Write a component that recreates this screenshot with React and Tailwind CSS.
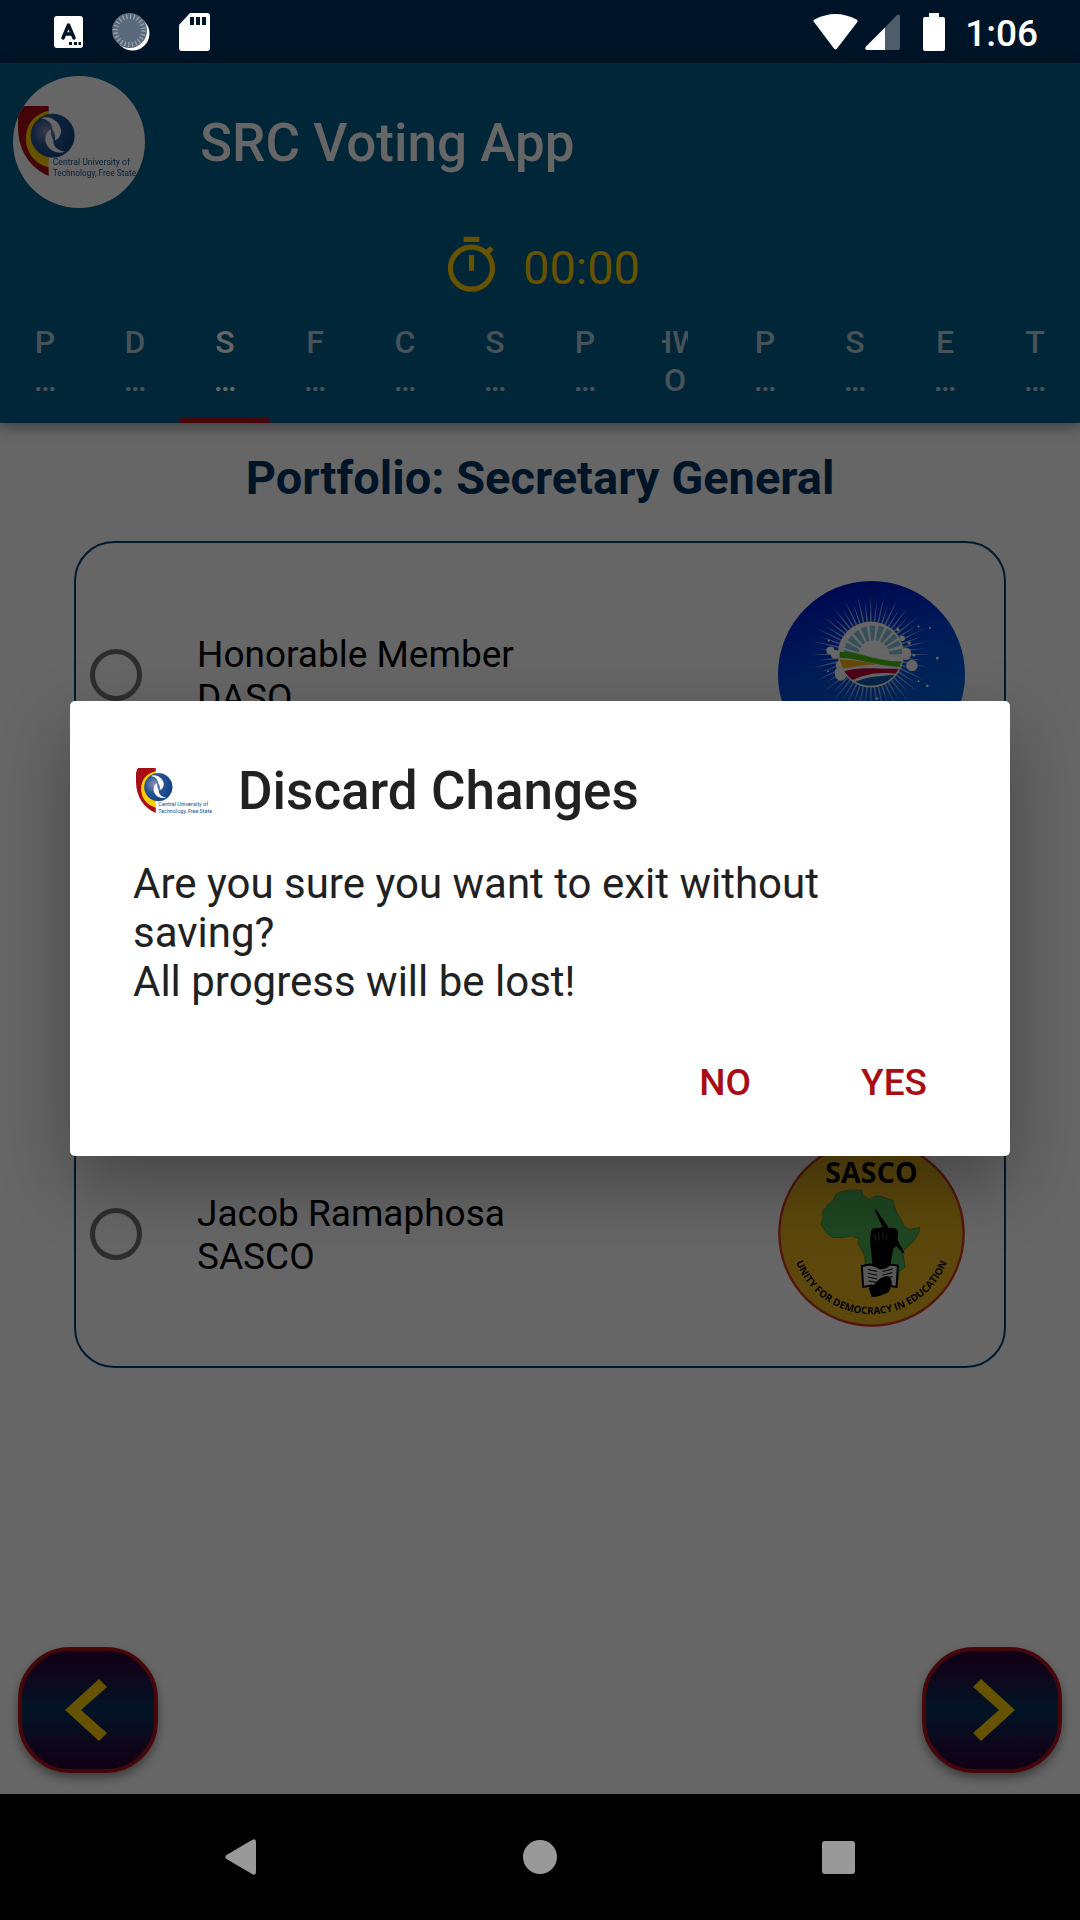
import React from "react";

const TABS = [
  ["P", "…"],
  ["D", "…"],
  ["S", "…"],
  ["F", "…"],
  ["C", "…"],
  ["S", "…"],
  ["P", "…"],
  ["HW", "O"],
  ["P", "…"],
  ["S", "…"],
  ["E", "…"],
  ["T", "…"],
];

function UniversityLogo({ className, id }) {
  return (
    <svg viewBox="54 107 354 218" className={className} role="img" aria-label="Central University of Technology, Free State">
      <defs>
        <radialGradient id={id} cx="0.35" cy="0.4" r="0.7">
          <stop offset="0" stopColor="#8d93b8" />
          <stop offset="0.45" stopColor="#2a5594" />
          <stop offset="1" stopColor="#0b3f80" />
        </radialGradient>
      </defs>
      <path d="M64 107H146V124C112 130 80 158 80 202C80 244 108 276 146 291V317C90 292 54 240 54 170V140Q54 116 64 107Z" fill="#a80c14" />
      <path d="M146 122C104 130 78 162 78 205C78 248 104 280 146 291V250L100 196L146 140Z" fill="#ffcf00" />
      <circle cx="158" cy="196" r="65" fill={`url(#${id})`} stroke="#0d4a86" strokeWidth="2" />
      <path d="M124 144C150 132 186 158 183 186C181 200 172 208 165 210C166 192 163 182 157 178C158 162 146 148 124 144Z" fill="#fff" />
      <path d="M196 244C166 256 134 232 136 204C137 190 144 180 152 178C152 192 156 204 160 209C158 228 172 241 196 244Z" fill="#fff" />
      <text x="158" y="285" fontFamily="Roboto, sans-serif" fontSize="26" fill="#11508c">Central University of</text>
      <text x="158" y="316" fontFamily="Roboto, sans-serif" fontSize="25" fill="#11508c">Technology, Free State</text>
    </svg>
  );
}

function rays(count, cx, cy, inner, outer) {
  return Array.from({ length: count }, (_, i) => {
    const a = (i / count) * Math.PI * 2;
    const end = outer + (i % 2 ? -14 : 8);
    const w = 0.028;
    const p = (r, t) => `${(cx + r * Math.cos(t)).toFixed(1)},${(cy + r * Math.sin(t)).toFixed(1)}`;
    return `M${p(inner, a - w)}L${p(end, a)}L${p(inner, a + w)}Z`;
  }).join("");
}

function DasoLogo() {
  const spokes = [-172, -157, -141, -124, -107, -90, -73, -56, -40, -24, -6];
  return (
    <svg viewBox="115 154 560 560" className="size-[187px] shrink-0 brightness-[0.4]" role="img" aria-label="DASO">
      <defs>
        <linearGradient id="daso-bg" x1="0.4" y1="0" x2="0.6" y2="0.7">
          <stop offset="0" stopColor="#0014c8" />
          <stop offset="0.5" stopColor="#0040dc" />
          <stop offset="1" stopColor="#0064e0" />
        </linearGradient>
        <clipPath id="daso-globe">
          <circle cx="393" cy="374" r="94" />
        </clipPath>
      </defs>
      <circle cx="395" cy="434" r="280" fill="url(#daso-bg)" />
      <path d={rays(56, 393, 374, 98, 174)} fill="#a8c4f8" opacity="0.85" />
      <g fill="#fff">
        <circle cx="393" cy="374" r="99" />
        <circle cx="272" cy="362" r="12" />
        <circle cx="286" cy="374" r="13" />
        <ellipse cx="303" cy="430" rx="18" ry="23" />
        <circle cx="298" cy="404" r="10" />
        <circle cx="516" cy="407" r="17" />
        <ellipse cx="498" cy="372" rx="16" ry="19" />
        <circle cx="487" cy="326" r="8" />
        <circle cx="508" cy="340" r="5" />
        <circle cx="474" cy="300" r="5" />
        <circle cx="522" cy="376" r="4" />
        <circle cx="267" cy="332" r="3" />
        <circle cx="265" cy="424" r="3" />
        <circle cx="536" cy="290" r="3" />
        <circle cx="570" cy="294" r="3" />
        <circle cx="592" cy="385" r="4" />
        <circle cx="562" cy="468" r="4" />
        <circle cx="536" cy="454" r="3" />
        <circle cx="412" cy="506" r="4" />
      </g>
      <g clipPath="url(#daso-globe)">
        <g fill="#84c6de">
          {spokes.map((d) => (
            <path key={d} d="M448 370L492 365V383L448 378Z" transform={`rotate(${d} 402 378)`} />
          ))}
        </g>
        <ellipse cx="402" cy="372" rx="44" ry="40" fill="#fff" />
        <path d="M290 366C360 362 410 398 495 395V412C410 412 360 384 290 384Z" fill="#4ac414" />
        <path d="M290 390C340 388 380 396 410 405C370 404 340 412 300 418Z" fill="#ffb414" />
        <path d="M310 426C360 406 420 420 490 416L470 432C410 424 370 436 336 452Z" fill="#c4063c" />
        <path d="M340 458C390 436 430 440 470 434L450 470H350Z" fill="#0a5cb4" />
      </g>
    </svg>
  );
}

function SascoLogo() {
  return (
    <svg viewBox="115 28 560 560" className="size-[187px] shrink-0 brightness-[0.4]" role="img" aria-label="SASCO">
      <defs>
        <path id="sasco-arc" d="M153 308A242 242 0 0 0 637 308" />
      </defs>
      <circle cx="395" cy="308" r="276" fill="#e6b41e" stroke="#d03424" strokeWidth="7" />
      <text x="395" y="156" textAnchor="middle" fontFamily="'Open Sans', sans-serif" fontWeight="700" fontSize="86" fill="#000">SASCO</text>
      <path
        d="M300 184L330 178L366 179L370 194L390 206L403 197L422 196L440 203L460 209L463 226L472 248L482 264L494 288L510 296L540 290L536 308L522 330L504 346L488 364L492 386L496 408L478 422L474 450L440 466L400 466L388 440L376 402L375 376L364 354L355 338L358 324L336 315L310 320L280 320L262 308L243 280L250 262L248 242L262 224L280 210L288 192Z"
        fill="#4eb056"
        stroke="#2b7436"
        strokeWidth="2"
      />
      <path d="M366 405L390 401L419 408L448 401L474 404L470 468L442 464L418 474L396 464L370 468Z" fill="#ddd" stroke="#000" strokeWidth="6" />
      <path d="M384 416L412 422M384 427L412 433M384 438L412 444M386 450L412 455M428 422L458 414M428 433L458 425M428 444L458 437" stroke="#000" strokeWidth="3" />
      <path d="M394 300Q398 290 414 292Q430 286 446 292Q466 288 474 300Q476 318 472 332Q470 348 460 354L452 400Q446 414 420 416L398 404L394 360Q388 330 394 300Z" fill="#000" />
      <path d="M404 237L409 237L442 284L474 330L495 368L488 366L462 338L430 292Z" fill="#000" />
      <path d="M386 472L404 460L412 450Q428 434 446 436Q458 444 455 464L446 484Q420 498 396 498Z" fill="#000" />
      <path d="M404 310L408 330M416 304L418 328M428 304L430 326M442 312L440 326" stroke="#777" strokeWidth="2" />
      <text fontFamily="'Open Sans', sans-serif" fontWeight="700" fontSize="30" fill="#000" textAnchor="middle">
        <textPath href="#sasco-arc" startOffset="50%">UNITY FOR DEMOCRACY IN EDUCATION</textPath>
      </text>
    </svg>
  );
}

function StatusBar() {
  return (
    <div className="flex h-[63px] items-center justify-between bg-[#001427] pl-[54px] pr-[42px] text-white">
      <div className="flex items-center gap-[29px]">
        <svg viewBox="0 0 29 32" className="h-8 w-[29px]">
          <rect width="29" height="32" rx="3" fill="#fff" />
          <path d="M9 22L14.500 9L20 22M11 18H18" stroke="#001427" strokeWidth="3.500" fill="none" strokeLinejoin="round" strokeLinecap="round" />
          <path d="M15 26H18V29H15ZM20 26H23V29H20ZM24.500 26H27V29H24.500Z" fill="#001427" />
        </svg>
        <svg viewBox="0 0 38 38" className="size-[38px]">
          <circle cx="20.500" cy="20.500" r="17" fill="#fff" />
          <circle cx="17.500" cy="17.500" r="17.500" fill="#59687a" />
          <circle cx="17.500" cy="17.500" r="14" fill="none" stroke="#98a2ad" strokeWidth="5" strokeDasharray="1.300 2.365" />
        </svg>
        <svg viewBox="0 0 31 38" className="h-[38px] w-[31px]">
          <path d="M11 0H28Q31 0 31 3V35Q31 38 28 38H3Q0 38 0 35V12Z" fill="#fff" />
          <path d="M11 4H15V12H11ZM17 4H21V12H17ZM23 4H27V12H23Z" fill="#001427" />
        </svg>
      </div>
      <div className="flex items-center">
        <svg viewBox="0 0 45 36" className="h-9 w-[45px]">
          <path d="M1 8Q-0.500 6.500 1.500 5.500Q22.500 -5.500 43.500 5.500Q45.500 6.500 44 8.500L24 34.500Q22.500 36.500 21 34.500Z" fill="#fff" />
        </svg>
        <svg viewBox="0 0 35 36" className="ml-[7px] h-9 w-[35px]">
          <path d="M20 13.500L31.500 1.500Q35 -1 35 3V34Q35 36 33 36H20Z" fill="#4f5d6b" />
          <path d="M20 13.500V36H2Q-1 35.500 1 32.500Z" fill="#fff" />
        </svg>
        <svg viewBox="0 0 22 38" className="ml-[23px] h-[38px] w-[22px]">
          <path d="M6 0H16V4H20Q22 4 22 6V36Q22 38 20 38H2Q0 38 0 36V6Q0 4 2 4H6Z" fill="#fff" />
        </svg>
        <span className="ml-5 pt-[3px] text-[37px] font-medium leading-[43px]">1:06</span>
      </div>
    </div>
  );
}

function Candidate({ id, name, party, children }) {
  return (
    <div className="flex items-center">
      <input
        id={id}
        type="radio"
        name="candidate"
        className="size-[52px] shrink-0 appearance-none rounded-full border-[5px] border-[#2e2e2e]"
      />
      <label htmlFor={id} className="ml-[55px] flex-1 pt-[3px] text-[37px] leading-[43px] text-black">
        {name}
        <br />
        {party}
      </label>
      {children}
    </div>
  );
}

function PageButton({ label, points, className }) {
  return (
    <button
      type="button"
      aria-label={label}
      className={
        "flex h-[126px] w-[140px] items-center justify-center rounded-[52px] border-4 border-[#45070b] bg-linear-to-b from-[#100014] via-[#001426] to-[#100014] shadow-[0_5px_10px_rgba(0,0,0,0.4)] " +
        className
      }
    >
      <svg viewBox="0 0 42 62" className="h-[62px] w-[42px]">
        <polygon points={points} fill="#665200" />
      </svg>
    </button>
  );
}

export default function App() {
  return (
    <div className="relative flex min-h-screen flex-col bg-[#666666] font-[Roboto,sans-serif]">
      <StatusBar />
      <header className="bg-[#002638] shadow-[0_4px_14px_rgba(0,0,0,0.4)]">
        <div className="flex items-center p-[13px]">
          <div className="flex size-[132px] items-center overflow-hidden rounded-full bg-[#666666] pl-[5px]">
            <UniversityLogo id="globe-header" className="w-[118px] shrink-0 brightness-[0.4]" />
          </div>
          <h1 className="ml-[55px] pt-[2px] text-[53px] font-medium leading-[62px] text-[#666666]">SRC Voting App</h1>
        </div>
        <div className="flex items-center justify-center gap-[20px] pt-[13px] text-[#665200]">
          <svg viewBox="0 0 24 24" className="size-[63px]" fill="currentColor">
            <path d="M15 1H9v2h6V1zm-4 13h2V8h-2v6zm8.030-6.610l1.420-1.420c-.43-.51-.9-.99-1.410-1.410l-1.420 1.420C16.070 4.740 14.120 4 12 4c-4.970 0-9 4.030-9 9s4.020 9 9 9 9-4.030 9-9c0-2.120-.74-4.070-1.970-5.610zM12 20c-3.870 0-7-3.130-7-7s3.130-7 7-7 7 3.130 7 7-3.130 7-7 7z" />
          </svg>
          <span className="pt-[3px] text-[47px] leading-[55px]">00:00</span>
        </div>
        <div role="tablist" className="grid grid-cols-12">
          {TABS.map(([first, second], i) => (
            <button
              key={i}
              type="button"
              role="tab"
              aria-selected={i === 2}
              className={
                "flex h-[126px] flex-col items-center justify-center border-b-[5px] px-8 pt-[6px] text-[32px] font-medium leading-[38px] " +
                (i === 2 ? "border-b-[#45070b] text-[#666666]" : "border-b-transparent text-[#475359]")
              }
            >
              <span className="flex w-full justify-center overflow-hidden">{first}</span>
              <span className="flex w-full justify-center overflow-hidden">{second}</span>
            </button>
          ))}
        </div>
      </header>

      <main className="flex flex-1 flex-col pt-[27px]">
        <h2 className="text-center text-[47px] font-bold leading-[55px] text-[#001427]">Portfolio: Secretary General</h2>
        <section className="mx-[74px] mt-9 flex flex-col gap-[372px] rounded-[40px] border-2 border-[#001a2e] pb-[39px] pl-[14px] pr-[39px] pt-[38px]">
          <Candidate id="daso" name="Honorable Member" party="DASO">
            <DasoLogo />
          </Candidate>
          <Candidate id="sasco" name="Jacob Ramaphosa" party="SASCO">
            <SascoLogo />
          </Candidate>
        </section>
        <div className="mt-auto flex justify-between px-[18px] pb-[21px]">
          <PageButton label="Previous" points="0,31 34,0 42,8 16,31 42,54 34,62" className="pr-1" />
          <PageButton label="Next" points="42,31 8,0 0,8 26,31 0,54 8,62" className="pl-1" />
        </div>
      </main>

      <nav className="grid h-[126px] grid-cols-3 bg-black px-[92px]">
        <button type="button" aria-label="Back" className="flex items-center justify-center">
          <svg viewBox="0 0 32 36" className="h-9 w-8">
            <path d="M1.500 16L27 1Q31 -1 31 3V33Q31 37 27 35L1.500 20Q-1 18 1.500 16Z" fill="#999" />
          </svg>
        </button>
        <button type="button" aria-label="Home" className="flex items-center justify-center">
          <span className="size-[34px] rounded-full bg-[#999999]" />
        </button>
        <button type="button" aria-label="Recent apps" className="flex items-center justify-center">
          <span className="size-[33px] rounded-[3px] bg-[#999999]" />
        </button>
      </nav>

      <div className="absolute inset-0 flex items-center px-[70px] pb-[126px] pt-[63px]">
        <div
          role="alertdialog"
          aria-labelledby="dialog-title"
          aria-describedby="dialog-message"
          className="w-full rounded-[5px] bg-white pb-[26px] pt-[59px] text-[#212121] shadow-[0_28px_70px_rgba(0,0,0,0.32)]"
        >
          <div className="flex items-center px-[63px]">
            <UniversityLogo id="globe-dialog" className="ml-[3px] w-[76px]" />
            <h2 id="dialog-title" className="ml-[26px] text-[53px] font-medium leading-[62px]">
              Discard Changes
            </h2>
          </div>
          <p id="dialog-message" className="mt-[37px] px-[63px] text-[42px] leading-[49px]">
            Are you sure you want to exit without saving?
            <br />
            All progress will be lost!
          </p>
          <div className="mt-[29px] flex justify-end gap-[30px] pr-[43px] text-[37px] font-medium leading-[43px] text-[#a80c14]">
            <button type="button" className="h-[95px] px-10">NO</button>
            <button type="button" className="h-[95px] px-10">YES</button>
          </div>
        </div>
      </div>
    </div>
  );
}
